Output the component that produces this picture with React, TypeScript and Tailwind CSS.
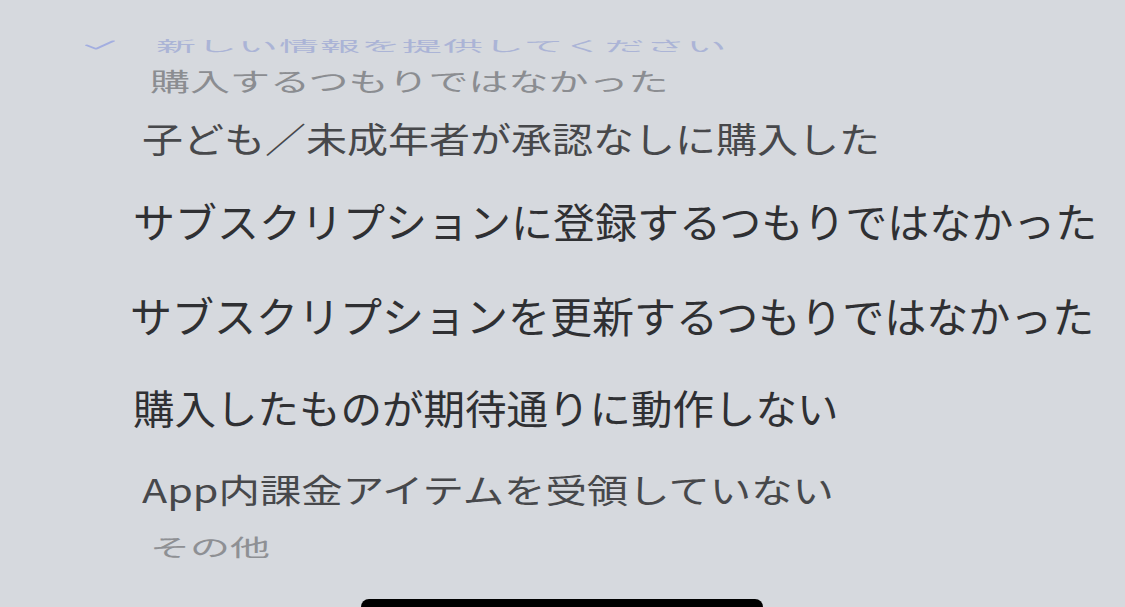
const rows = [
  { text: "購入するつもりではなかった", h: "h-[48px]", pl: "pl-[150px]", size: "text-[40px]", color: "text-[#8b8d91]", scale: "scale-y-[0.62]" },
  { text: "子ども／未成年者が承認なしに購入した", h: "h-[68px]", pl: "pl-[142px]", size: "text-[41px]", color: "text-[#47484b]", scale: "scale-y-[0.85]" },
  { text: "サブスクリプションに登録するつもりではなかった", h: "h-[96px]", pl: "pl-[133px]", size: "text-[42px]", color: "text-[#2f3033]", scale: "scale-y-[0.98]" },
  { text: "サブスクリプションを更新するつもりではなかった", h: "h-[94px]", pl: "pl-[130px]", size: "text-[42px]", color: "text-[#2f3033]", scale: "scale-y-100" },
  { text: "購入したものが期待通りに動作しない", h: "h-[92px]", pl: "pl-[133px]", size: "text-[41.5px]", color: "text-[#2f3033]", scale: "scale-y-[0.97]" },
  { text: "App内課金アイテムを受領していない", h: "h-[70px]", pl: "pl-[142px]", size: "text-[41.4px]", color: "text-[#47484b]", scale: "scale-y-[0.8]" },
  { text: "その他", h: "h-[44px]", pl: "pl-[150px]", size: "text-[40px]", color: "text-[#8e9094]", scale: "scale-y-[0.58]" },
];

export default function App() {
  return (
    <div
      className="w-[1125px] h-[607px] bg-[#d6d9de] overflow-hidden flex flex-col"
      style={{ fontFamily: '"Noto Sans CJK JP", "Noto Sans", sans-serif' }}
    >
      {/* top, mostly rotated out of view */}
      <div className="h-[56px] pt-[34px] flex items-center pl-[84px] text-[#abb4d6] text-[40px] leading-none whitespace-nowrap">
        <span className="scale-y-[0.35] flex items-center gap-[40px] origin-center">
          <svg width="32" height="30" viewBox="0 0 32 30" fill="none" stroke="#a3aee0" strokeWidth="4" strokeLinecap="round" strokeLinejoin="round">
            <path d="M3 16 L12 26 L29 4" />
          </svg>
          <span className="tracking-[1px]">新しい情報を提供してください</span>
        </span>
      </div>

      {rows.map((r) => (
        <div key={r.text} className={`${r.h} ${r.pl} flex items-center whitespace-nowrap`}>
          <span className={`${r.color} ${r.scale} ${r.size} leading-none inline-block`}>{r.text}</span>
        </div>
      ))}

      <div className="flex-1 flex items-end justify-center">
        <div className="w-[402px] h-[8px] bg-black rounded-t-[8px] ml-[-2px]" />
      </div>
    </div>
  );
}
